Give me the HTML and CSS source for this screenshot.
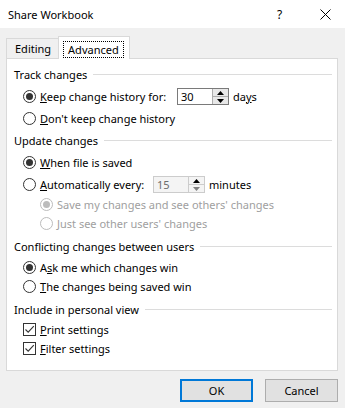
FILE: index.html
```html
<!DOCTYPE html>
<html lang="en">
<head>
    <meta charset="UTF-8">
    <title>Share Workbook</title>
    <link rel="stylesheet" href="styles.css">
</head>
<body>
    <div class="dialog">
        <!-- Title bar -->
        <div class="titlebar">
            <span class="title">Share Workbook</span>
            <span class="help">?</span>
            <span class="close">
                <svg width="11" height="11" viewBox="0 0 11 11"><path d="M0.5 0.5 L10.5 10.5 M10.5 0.5 L0.5 10.5" stroke="#000" stroke-width="1" fill="none"/></svg>
            </span>
        </div>

        <!-- Tabs -->
        <div class="tabs">
            <div class="tab">Editing</div>
            <div class="tab active"><span class="focus">Advanced</span></div>
        </div>

        <div class="panel">
            <!-- Track changes -->
            <div class="legend"><span>Track changes</span><i></i></div>
            <div class="opt">
                <span class="radio checked"></span>
                <span class="lbl lbl-keep"><u>K</u>eep change history for:</span>
                <span class="spin">
                    <span class="spin-val">30</span>
                    <span class="spin-btns">
                        <span class="arrow"><svg width="7" height="4" viewBox="0 0 7 4"><path d="M3.5 0 L7 4 L0 4 Z" fill="#000"/></svg></span>
                        <span class="arrow"><svg width="7" height="4" viewBox="0 0 7 4"><path d="M0 0 L7 0 L3.5 4 Z" fill="#000"/></svg></span>
                    </span>
                </span>
                <span class="unit">da<u>y</u>s</span>
            </div>
            <div class="opt">
                <span class="radio"></span>
                <span class="lbl"><u>D</u>on't keep change history</span>
            </div>

            <!-- Update changes -->
            <div class="legend"><span>Update changes</span><i></i></div>
            <div class="opt">
                <span class="radio checked"></span>
                <span class="lbl"><u>W</u>hen file is saved</span>
            </div>
            <div class="opt">
                <span class="radio"></span>
                <span class="lbl lbl-auto"><u>A</u>utomatically every:</span>
                <span class="spin disabled">
                    <span class="spin-val">15</span>
                    <span class="spin-btns">
                        <span class="arrow"><svg width="7" height="4" viewBox="0 0 7 4"><path d="M3.5 0 L7 4 L0 4 Z" fill="#000"/></svg></span>
                        <span class="arrow"><svg width="7" height="4" viewBox="0 0 7 4"><path d="M0 0 L7 0 L3.5 4 Z" fill="#808080"/></svg></span>
                    </span>
                </span>
                <span class="unit">minutes</span>
            </div>
            <div class="opt sub disabled">
                <span class="radio checked"></span>
                <span class="lbl">Save my changes and see others' changes</span>
            </div>
            <div class="opt sub disabled">
                <span class="radio"></span>
                <span class="lbl">Just see other users' changes</span>
            </div>

            <!-- Conflicting changes -->
            <div class="legend spaced"><span>Conflicting changes between users</span><i></i></div>
            <div class="opt short first">
                <span class="radio checked"></span>
                <span class="lbl">A<u>s</u>k me which changes win</span>
            </div>
            <div class="opt short">
                <span class="radio"></span>
                <span class="lbl"><u>T</u>he changes being saved win</span>
            </div>

            <!-- Personal view -->
            <div class="legend spaced"><span>Include in personal view</span><i></i></div>
            <div class="opt short">
                <span class="check"><svg width="11" height="11" viewBox="0 0 11 11"><path d="M1.5 5.5 L4.2 8.2 L9.8 2.2" stroke="#333" stroke-width="1.1" fill="none"/></svg></span>
                <span class="lbl"><u>P</u>rint settings</span>
            </div>
            <div class="opt short">
                <span class="check"><svg width="11" height="11" viewBox="0 0 11 11"><path d="M1.5 5.5 L4.2 8.2 L9.8 2.2" stroke="#333" stroke-width="1.1" fill="none"/></svg></span>
                <span class="lbl"><u>F</u>ilter settings</span>
            </div>
        </div>

        <!-- Dialog buttons -->
        <div class="buttons">
            <button class="btn default">OK</button>
            <button class="btn">Cancel</button>
        </div>
    </div>
</body>
</html>
```

FILE: styles.css
```css
/* Basic Reset */
body, div, span, button {
    margin: 0;
    padding: 0;
    box-sizing: border-box;
}

body {
    font-family: "Noto Sans", "Open Sans", sans-serif;
    font-size: 11px;
    color: #000;
    background-color: #f0f0f0;
}

.dialog {
    width: 345px;
    height: 408px;
    overflow: hidden;
}

u {
    text-decoration: underline;
    text-underline-offset: 1px;
}

/* Title bar */
.titlebar {
    height: 28px;
    background-color: #fff;
    display: flex;
    align-items: center;
    padding-left: 8px;
}

.title {
    font-size: 11px;
    flex: 1;
}

.help {
    font-size: 12px;
    width: 41px;
    margin-right: 2px;
}

.close {
    width: 22px;
    display: flex;
    align-items: center;
    margin-right: 3px;
    margin-top: 1px;
}

/* Tabs */
.tabs {
    display: flex;
    align-items: flex-end;
    padding-left: 6px;
    margin-top: 7px;
    height: 23px;
}

.tab {
    height: 20px;
    padding: 2px 7px 0 8px;
    border: 1px solid #d9d9d9;
    border-bottom: none;
    border-right: none;
}

.tab.active {
    height: 23px;
    padding: 4px 5px 0 4px;
    background-color: #fff;
    border-right: 1px solid #d9d9d9;
    margin-bottom: -1px;
    position: relative;
    z-index: 1;
}

.focus {
    display: inline-block;
    border: 1px dotted #000;
    padding: 0 4px;
    line-height: 15px;
}

/* Panel */
.panel {
    margin: 0 7px 0 6px;
    height: 313px;
    background-color: #fff;
    border: 1px solid #d9d9d9;
    padding: 4px 5px 0 7px;
}

.legend {
    height: 22px;
    display: flex;
    align-items: center;
}

.legend.spaced {
    margin-top: 2px;
}

.legend i {
    flex: 1;
    height: 1px;
    background-color: #dcdcdc;
    margin-left: 6px;
    margin-top: 1px;
}

.opt {
    height: 22px;
    display: flex;
    align-items: center;
    padding-left: 9px;
}

.opt.sub {
    height: 19px;
    padding-left: 26px;
}

.opt.short {
    height: 19px;
}

.opt.first {
    height: 20px;
}

.opt.disabled {
    color: #a0a0a0;
}

.radio {
    width: 13px;
    height: 13px;
    border: 1px solid #333;
    border-radius: 50%;
    display: flex;
    align-items: center;
    justify-content: center;
    margin-right: 4px;
}

.radio.checked::after {
    content: "";
    width: 7px;
    height: 7px;
    border-radius: 50%;
    background-color: #333;
}

.disabled .radio {
    border-color: #bcbcbc;
}

.disabled .radio.checked::after {
    background-color: #bcbcbc;
}

.check {
    width: 13px;
    height: 13px;
    border: 1px solid #333;
    display: flex;
    align-items: center;
    justify-content: center;
    margin-right: 4px;
}

.lbl-keep {
    width: 137px;
}

.lbl-auto {
    width: 113px;
}

/* Spin box */
.spin {
    width: 52px;
    height: 17px;
    border: 1px solid #7a7a7a;
    display: flex;
    background-color: #fff;
    margin-top: 1px;
}

.spin-val {
    flex: 1;
    padding-left: 3px;
    line-height: 15px;
}

.spin-btns {
    width: 16px;
    display: flex;
    flex-direction: column;
    border-left: 1px solid #adadad;
}

.arrow {
    flex: 1;
    display: flex;
    align-items: center;
    justify-content: center;
    background-color: #e8e8e8;
}

.arrow + .arrow {
    border-top: 1px solid #adadad;
}

.spin.disabled {
    border-color: #cccccc;
    background-color: #f4f4f4;
    color: #6d6d6d;
}

.spin.disabled .spin-btns {
    border-left-color: #cccccc;
}

.spin.disabled .arrow {
    background-color: #f4f4f4;
}

.spin.disabled .arrow + .arrow {
    border-top-color: #cccccc;
}

.unit {
    margin-left: 4px;
}

/* Buttons */
.buttons {
    display: flex;
    justify-content: flex-end;
    gap: 12px;
    margin-top: 8px;
    padding-right: 7px;
}

.btn {
    width: 73px;
    height: 23px;
    font-family: "Noto Sans", "Open Sans", sans-serif;
    font-size: 11px;
    background-color: #e1e1e1;
    border: 1px solid #adadad;
    color: #000;
}

.btn.default {
    border: 2px solid #0078d7;
}
```
